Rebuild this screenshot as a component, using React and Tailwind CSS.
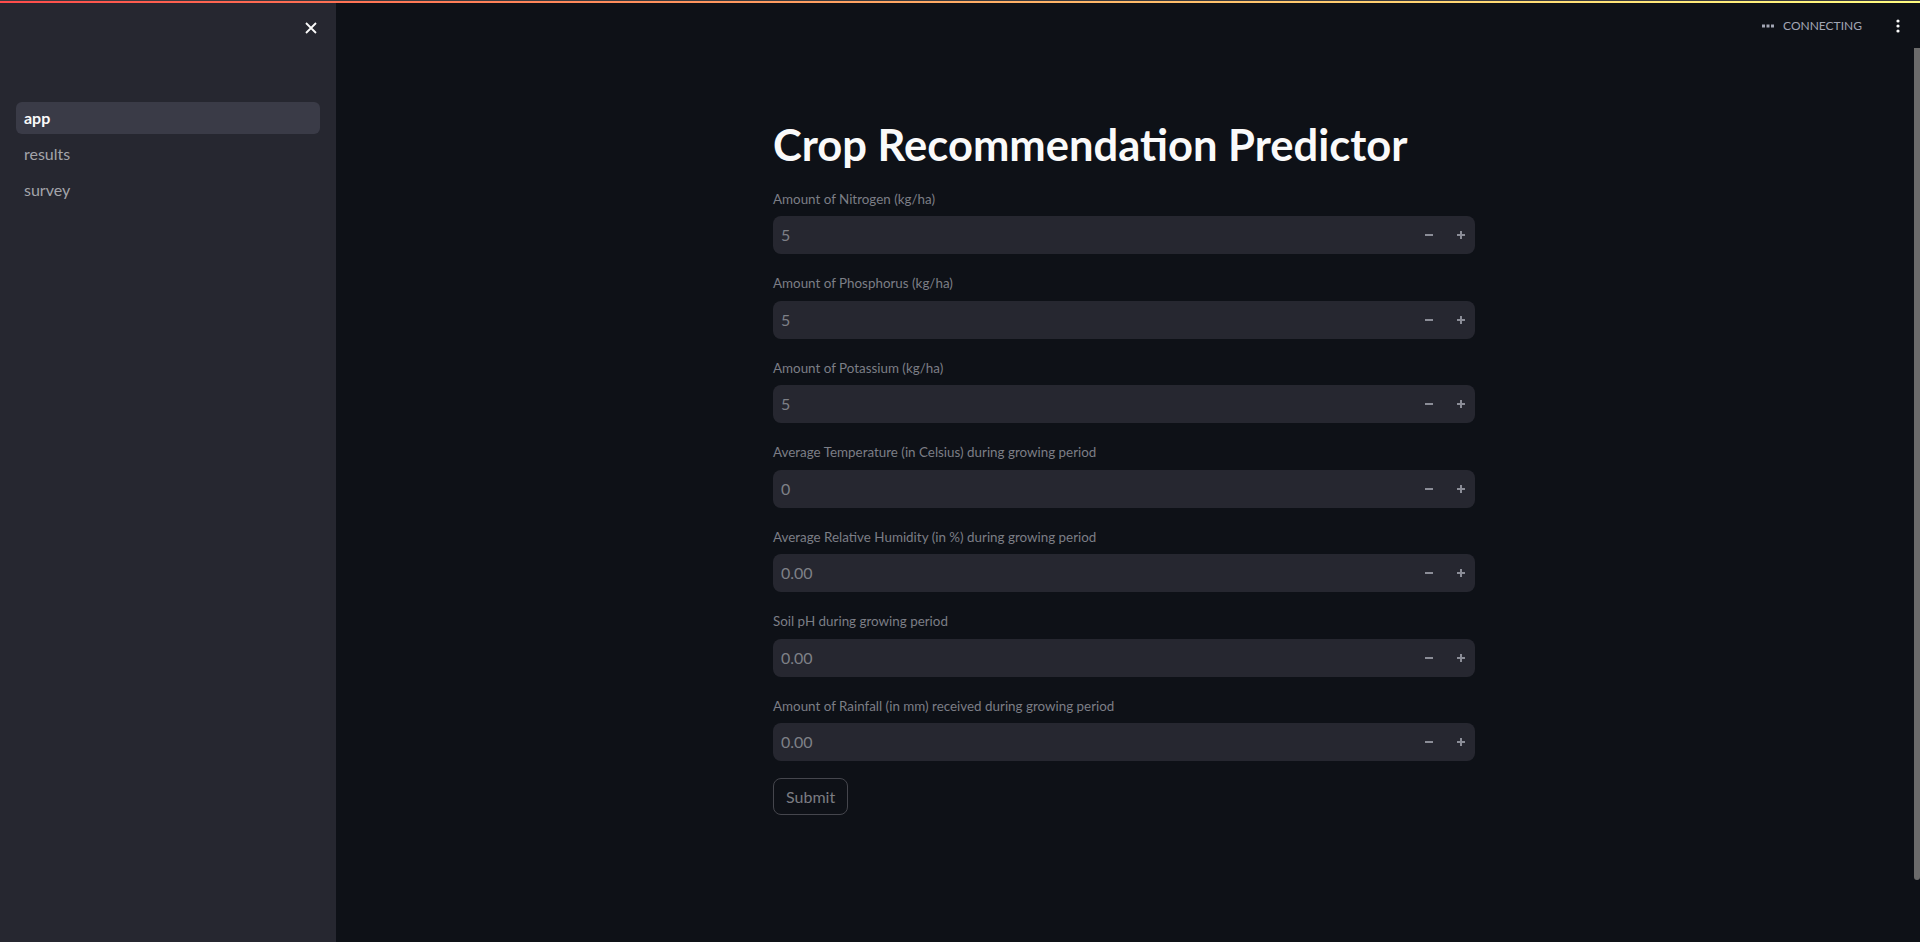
import React, { useState } from 'react';

const FIELDS = [
  { label: 'Amount of Nitrogen (kg/ha)', value: '5' },
  { label: 'Amount of Phosphorus (kg/ha)', value: '5' },
  { label: 'Amount of Potassium (kg/ha)', value: '5' },
  { label: 'Average Temperature (in Celsius) during growing period', value: '0' },
  { label: 'Average Relative Humidity (in %) during growing period', value: '0.00' },
  { label: 'Soil pH during growing period', value: '0.00' },
  { label: 'Amount of Rainfall (in mm) received during growing period', value: '0.00' },
];

const PAGES = ['app', 'results', 'survey'];

const NumberField = ({ label, value }) => (
  <div className="flex flex-col">
    <label className="h-6 mb-[5px] flex items-center text-[13.4px] text-[#7c7e86]">{label}</label>
    <div className="h-[38px] rounded-lg bg-[#262730] flex items-center">
      <input
        defaultValue={value}
        className="flex-1 bg-transparent pl-[8px] text-[16px] text-[#7e8087] outline-none"
      />
      <button className="w-8 h-full flex items-center justify-center">
        <svg width="10" height="10" viewBox="0 0 10 10">
          <path d="M1 5h8" stroke="#8b8d97" strokeWidth="2" />
        </svg>
      </button>
      <button className="w-8 h-full flex items-center justify-center mr-[-2px]">
        <svg width="10" height="10" viewBox="0 0 10 10">
          <path d="M1 5h8M5 1v8" stroke="#8b8d97" strokeWidth="2" />
        </svg>
      </button>
    </div>
  </div>
);

export default function App() {
  const [active, setActive] = useState('app');

  return (
    <div
      className="relative h-[942px] w-[1920px] flex overflow-hidden bg-[#0e1117]"
      style={{ fontFamily: '"Source Sans Pro", Lato, "Noto Sans", sans-serif' }}
    >
      {/* top decoration line */}
      <div className="absolute top-0 left-0 right-0 h-[3px] bg-gradient-to-r from-[#ff4b4b] to-[#fffd80] border-t border-[#3a3b40]" />

      {/* Sidebar */}
      <aside className="w-[336px] shrink-0 bg-[#262730] flex flex-col">
        <div className="flex justify-end pt-[21px] pr-[18px]">
          <button className="w-[14px] h-[14px] flex items-center justify-center">
            <svg width="14" height="14" viewBox="0 0 14 14">
              <path d="M2 2l10 10M12 2L2 12" stroke="#fafafa" strokeWidth="1.8" />
            </svg>
          </button>
        </div>
        <nav className="mt-[67px] px-4 flex flex-col gap-1">
          {PAGES.map(p => (
            <button
              key={p}
              onClick={() => setActive(p)}
              className={`h-8 rounded-md px-2 text-left text-[16px] ${
                active === p ? 'bg-[#3a3b47] text-[#fafafa] font-bold' : 'text-[#a3a4aa]'
              }`}
            >
              {p}
            </button>
          ))}
        </nav>
      </aside>

      {/* Main */}
      <main className="flex-1 flex flex-col pr-2">
        {/* header */}
        <div className="h-[52px] flex items-center justify-end pr-[6px]">
          <div className="flex items-center gap-[9px] text-[12px] text-[#a2a6b4]">
            <svg width="12" height="4" viewBox="0 0 12 4">
              <rect x="0" y="0.5" width="3" height="3" fill="#a2a6b4" />
              <rect x="4.5" y="0.5" width="3" height="3" fill="#a2a6b4" />
              <rect x="9" y="0.5" width="3" height="3" fill="#a2a6b4" />
            </svg>
            <span>CONNECTING</span>
          </div>
          <button className="ml-[28px] w-4 h-4 flex items-center justify-center">
            <svg width="4" height="14" viewBox="0 0 4 14">
              <circle cx="2" cy="2" r="1.6" fill="#fafafa" />
              <circle cx="2" cy="7" r="1.6" fill="#fafafa" />
              <circle cx="2" cy="12" r="1.6" fill="#fafafa" />
            </svg>
          </button>
        </div>

        <div className="mx-auto w-[702px] pt-[66px]">
          <h1 className="text-[43.5px] leading-[52px] font-bold text-[#fafafa] mb-[17px]">
            Crop Recommendation Predictor
          </h1>
          <div className="flex flex-col gap-[17.5px]">
            {FIELDS.map(f => (
              <NumberField key={f.label} label={f.label} value={f.value} />
            ))}
          </div>
          <button className="mt-[17px] h-[37px] px-[12px] rounded-lg border border-[#45464d] text-[16px] text-[#7b7c82]">
            Submit
          </button>
        </div>
      </main>

      {/* scrollbar */}
      <div className="absolute right-0 top-[48px] w-[6px] h-[832px] bg-[#6b6b6b] rounded-b-sm" />
    </div>
  );
}
